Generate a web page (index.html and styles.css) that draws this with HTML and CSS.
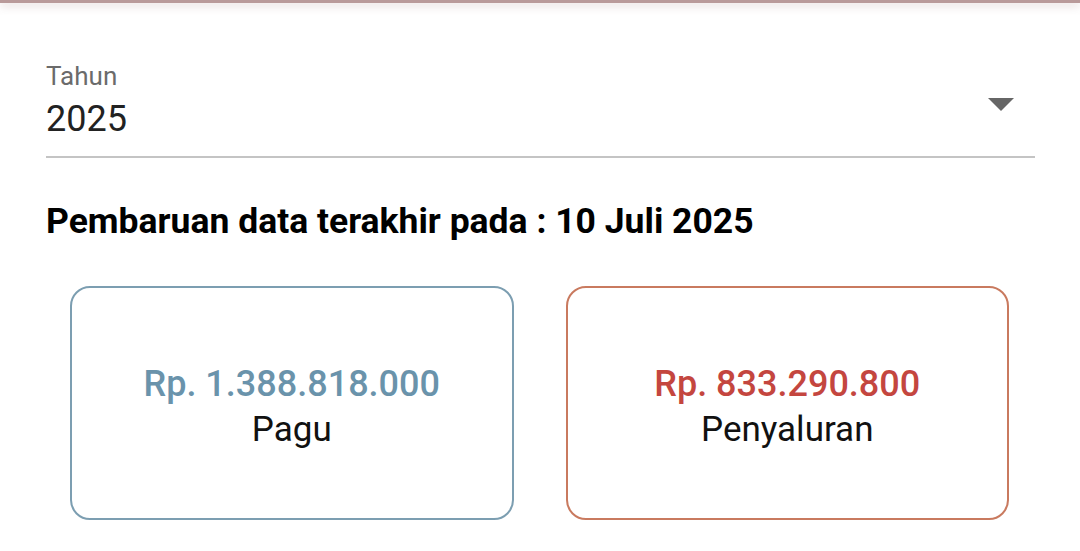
FILE: index.html
```html
<!DOCTYPE html>
<html>
<head>
<title>Dana Desa</title>
<meta charset="utf-8">
<meta name="viewport" content="width=device-width, initial-scale=1">
<link rel="stylesheet" href="styles.css">
</head>
<body>
<div class="topbar"></div>
<div class="content">
	<div class="select-field">
		<div class="select-text">
			<label class="select-label">Tahun</label>
			<div class="select-value">2025</div>
		</div>
		<svg class="select-arrow" width="26" height="13" viewBox="0 0 26 13"><polygon points="0,0 26,0 13,13" fill="#666"/></svg>
	</div>
	<h2 class="updated">Pembaruan data terakhir pada : 10 Juli 2025</h2>
	<div class="cards">
		<div class="card card-pagu">
			<div class="amount">Rp. 1.388.818.000</div>
			<div class="caption">Pagu</div>
		</div>
		<div class="card card-salur">
			<div class="amount">Rp. 833.290.800</div>
			<div class="caption">Penyaluran</div>
		</div>
	</div>
</div>
</body>
</html>
```

FILE: styles.css
```css
body {
	margin: 0;
	font-family: Roboto, "Noto Sans", sans-serif;
	color: #212121;
	background-color: #fff;
}
.topbar {
	height: 3px;
	background-color: #b99a9a;
	box-shadow: 0 2px 10px rgba(150, 110, 110, .45);
}
.content {
	padding: 0 45px 0 46px;
}
.select-field {
	display: flex;
	align-items: center;
	border-bottom: 2px solid #c4c4c4;
	margin-top: 57px;
	padding-bottom: 13px;
}
.select-text {
	flex: 1;
}
.select-label {
	display: block;
	font-size: 26px;
	line-height: 32px;
	margin-bottom: 3px;
	color: #6b6b6b;
}
.select-value {
	font-size: 36px;
	line-height: 48px;
	color: #222;
}
.select-arrow {
	margin-right: 21px;
	margin-top: 6px;
}
.updated {
	margin: 41px 0 43px;
	font-size: 35.5px;
	font-weight: 700;
	line-height: 44px;
	color: #000;
}
.cards {
	display: flex;
	gap: 52px;
	padding: 0 26px 0 24px;
}
.card {
	flex: 1;
	border: 2px solid;
	border-radius: 20px;
	display: flex;
	flex-direction: column;
	align-items: center;
	justify-content: center;
	text-align: center;
	padding-top: 8px;
	box-sizing: border-box;
	height: 234px;
}
.card-pagu {
	border-color: #7c9eb1;
}
.card-salur {
	border-color: #c97a5f;
}
.amount {
	font-size: 36px;
	font-weight: 500;
	line-height: 46px;
}
.card-pagu .amount {
	color: #6a93ab;
}
.card-salur .amount {
	color: #c4463f;
}
.caption {
	font-size: 35px;
	line-height: 46px;
	color: #111;
}
```
